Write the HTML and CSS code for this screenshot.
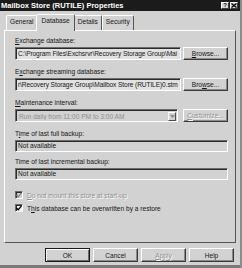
FILE: index.html
```html
<!DOCTYPE html>
<html lang="en">
    <head>
        <meta charset="UTF-8" />
        <link rel="stylesheet" href="styles.css">
        <title>Mailbox Store (RUTILE) Properties</title>
    </head>
    <body>
        <div class="window">
            <!-- 标题栏 -->
            <div class="titlebar">
                <span class="title">Mailbox Store (RUTILE) Properties</span>
                <div class="title-buttons">
                    <span class="tbtn">?</span>
                    <span class="tbtn">
                        <svg width="6" height="5" viewBox="0 0 6 5">
                            <path d="M0.5 0.5 L5.5 4.5 M5.5 0.5 L0.5 4.5" stroke="#000" stroke-width="1.3" fill="none" />
                        </svg>
                    </span>
                </div>
            </div>

            <div class="tabs">
                <div class="tab">General</div>
                <div class="tab active">Database</div>
                <div class="tab">Details</div>
                <div class="tab">Security</div>
            </div>

            <div class="panel">
                <div class="group">
                    <div class="label"><u>E</u>xchange database:</div>
                    <div class="row">
                        <div class="field">C:\Program Files\Exchsrvr\Recovery Storage Group\Mai</div>
                        <div class="btn"><u>B</u>rowse...</div>
                    </div>
                </div>

                <div class="group">
                    <div class="label">E<u>x</u>change streaming database:</div>
                    <div class="row">
                        <div class="field">r\Recovery Storage Group\Mailbox Store (RUTILE)0.stm</div>
                        <div class="btn">Bro<u>w</u>se...</div>
                    </div>
                </div>

                <div class="group">
                    <div class="label"><u>M</u>aintenance interval:</div>
                    <div class="row">
                        <div class="combo">
                            <span class="combo-text">Run daily from 11:00 PM to 3:00 AM</span>
                            <span class="combo-arrow">
                                <svg width="5" height="3" viewBox="0 0 5 3">
                                    <path d="M0 0 H5 L2.5 3 Z" fill="#888" />
                                </svg>
                            </span>
                        </div>
                        <div class="btn disabled"><u>C</u>ustomize...</div>
                    </div>
                </div>

                <div class="group short">
                    <div class="label">T<u>i</u>me of last full backup:</div>
                    <div class="field readonly">Not available</div>
                </div>

                <div class="group short">
                    <div class="label">Time of last incremental backup:</div>
                    <div class="field readonly">Not available</div>
                </div>

                <div class="checks">
                    <div class="check disabled">
                        <span class="box">
                            <svg width="6" height="6" viewBox="0 0 6 6">
                                <path d="M0.5 3 L2.2 4.8 L5.5 0.8" stroke="#888" stroke-width="1.3" fill="none" />
                            </svg>
                        </span>
                        <span><u>D</u>o not mount this store at start-up</span>
                    </div>
                    <div class="check">
                        <span class="box">
                            <svg width="6" height="6" viewBox="0 0 6 6">
                                <path d="M0.5 3 L2.2 4.8 L5.5 0.8" stroke="#000" stroke-width="1.3" fill="none" />
                            </svg>
                        </span>
                        <span>T<u>h</u>is database can be overwritten by a restore</span>
                    </div>
                </div>
            </div>

            <div class="buttons">
                <div class="btn default">OK</div>
                <div class="btn">Cancel</div>
                <div class="btn disabled"><u>A</u>pply</div>
                <div class="btn">Help</div>
            </div>

            <div class="bottom-edge"></div>
        </div>
    </body>
</html>
```

FILE: styles.css
```css
/* 基础样式 */
body,
html {
    margin: 0;
    padding: 0;
    width: 242px;
    height: 268px;
    overflow: hidden;
    background: #d2d2d2;
}

body {
    font-family: "Liberation Sans", Arial, sans-serif;
    font-size: 6.6px;
    color: #151515;
}

.window {
    width: 242px;
    height: 268px;
    box-sizing: border-box;
    background: #d2d2d2;
    border-right: 2px solid #8c8c8c;
    display: flex;
    flex-direction: column;
}

/* 标题栏 */
.titlebar {
    height: 11px;
    flex-shrink: 0;
    background: #1b1b1b;
    display: flex;
    align-items: center;
    padding: 0 2px 0 1px;
}

.title {
    flex: 1;
    color: #fff;
    font-weight: bold;
    font-size: 7.5px;
    line-height: 11px;
}

.title-buttons {
    display: flex;
    gap: 1px;
}

.tbtn {
    width: 8px;
    height: 7px;
    box-sizing: border-box;
    background: #d2d2d2;
    border: 1px solid;
    border-color: #fff #3c3c3c #3c3c3c #fff;
    display: flex;
    align-items: center;
    justify-content: center;
    font-size: 6px;
    font-weight: bold;
    line-height: 5px;
}

/* 标签页 */
.tabs {
    height: 19px;
    flex-shrink: 0;
    display: flex;
    align-items: flex-end;
    padding-left: 6px;
}

.tab {
    height: 15px;
    box-sizing: border-box;
    border: 1px solid;
    border-bottom: none;
    border-color: #fff #555 transparent #fff;
    border-radius: 2px 2px 0 0;
    padding: 0 3px;
    line-height: 12px;
}

.tab.active {
    height: 17px;
    margin: 0 -1px -1px;
    padding: 0 4px;
    line-height: 12px;
    background: #d2d2d2;
    position: relative;
    z-index: 1;
}

/* 面板 */
.panel {
    height: 213px;
    flex-shrink: 0;
    box-sizing: border-box;
    margin-left: 4px;
    width: 232px;
    border: 1px solid;
    border-color: #fff #555 #555 #fff;
    padding: 5px 7px 0 10px;
    display: flex;
    flex-direction: column;
}

.group {
    display: flex;
    flex-direction: column;
    gap: 2px;
    margin-bottom: 7px;
}

.group.short {
    margin-bottom: 5px;
}

.label {
    height: 9px;
    line-height: 9px;
    white-space: nowrap;
}

.row {
    display: flex;
    align-items: stretch;
    height: 13px;
    gap: 2px;
}

.field {
    flex: 1;
    min-width: 0;
    height: 13px;
    box-sizing: border-box;
    border: 1px solid;
    border-color: #6c6c6c #fff #fff #6c6c6c;
    box-shadow: inset 1px 1px 0 #2a2a2a;
    background: #e2e2e2;
    padding: 0 1px 0 2px;
    line-height: 11px;
    letter-spacing: -0.1px;
    white-space: nowrap;
    overflow: hidden;
}

.field.readonly {
    flex: none;
    height: 12px;
    background: #d2d2d2;
    line-height: 10px;
    letter-spacing: 0;
}

.combo {
    flex: 1;
    margin-right: 3px;
    box-sizing: border-box;
    border: 1px solid;
    border-color: #6c6c6c #fff #fff #6c6c6c;
    box-shadow: inset 1px 1px 0 #2a2a2a;
    background: #d2d2d2;
    display: flex;
    align-items: center;
    padding: 1px 1px 0 3px;
}

.combo-text {
    flex: 1;
    color: #8e8e8e;
    white-space: nowrap;
    overflow: hidden;
}

.combo-arrow {
    width: 8px;
    height: 9px;
    box-sizing: border-box;
    border: 1px solid;
    border-color: #fff #4a4a4a #4a4a4a #fff;
    display: flex;
    align-items: center;
    justify-content: center;
}

/* 按钮 */
.btn {
    width: 45px;
    height: 13px;
    flex-shrink: 0;
    box-sizing: border-box;
    border: 1px solid;
    border-color: #fff #3a3a3a #3a3a3a #fff;
    box-shadow: inset -1px -1px 0 #8a8a8a;
    display: flex;
    align-items: center;
    justify-content: center;
    white-space: nowrap;
}

.btn.disabled {
    color: #909090;
    text-shadow: 1px 1px 0 #fff;
}

.btn.default {
    border-color: #1a1a1a;
    box-shadow: inset 1px 1px 0 #fff, inset -1px -1px 0 #6a6a6a;
}

/* 复选框 */
.checks {
    display: flex;
    flex-direction: column;
    gap: 3px;
    margin-top: 5px;
}

.check {
    display: flex;
    align-items: center;
    gap: 4px;
    height: 10px;
    white-space: nowrap;
}

.check.disabled {
    color: #909090;
    text-shadow: 1px 1px 0 #fff;
}

.box {
    width: 8px;
    height: 8px;
    box-sizing: border-box;
    border: 1px solid;
    border-color: #6c6c6c #fff #fff #6c6c6c;
    box-shadow: inset 1px 1px 0 #2a2a2a;
    background: #eee;
    display: flex;
    align-items: center;
    justify-content: center;
}

.check.disabled .box {
    background: #d2d2d2;
}

/* 底部按钮 */
.buttons {
    display: flex;
    justify-content: flex-end;
    gap: 3px;
    padding: 5px 6px 0 0;
}

.buttons .btn {
    width: 45px;
    height: 14px;
}

.bottom-edge {
    margin-top: auto;
    height: 3px;
    background: #7a7a7a;
}
```
